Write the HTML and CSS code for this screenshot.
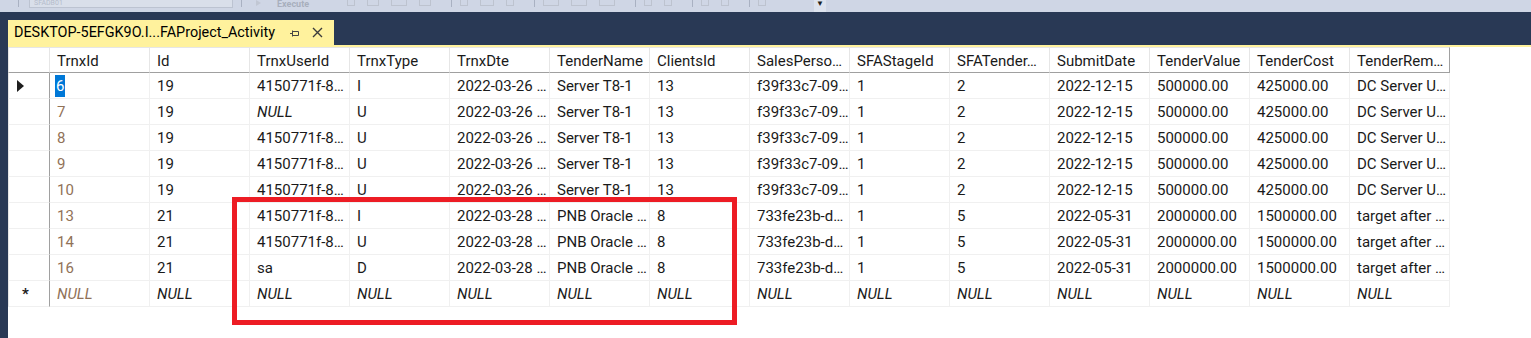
FILE: index.html
```html
<!DOCTYPE html>
<html lang="en">
<head>
    <meta charset="UTF-8">
    <title>DESKTOP-5EFGK9O - SFAProject_Activity</title>
    <link rel="stylesheet" href="styles.css">
</head>
<body>
    <!-- верхняя панель инструментов, почти вся обрезана -->
    <div class="toolbar">
        <span class="sep first"></span>
        <span class="dbbox"><span class="dbname">SFADB01</span></span>
        <span class="sep"></span>
        <span class="tb-play"></span>
        <span class="tb-text">Execute</span>
        <span class="tb-ico w10"></span>
        <span class="tb-ico w14"></span>
        <span class="tb-ico w18"></span>
        <span class="tb-ico w14"></span>
        <span class="sep"></span>
        <span class="tb-ico w10"></span>
        <span class="tb-ico w16"></span>
        <span class="tb-ico w10"></span>
        <span class="sep"></span>
        <span class="tb-ico w18"></span>
        <span class="tb-ico w18"></span>
        <span class="tb-ico w18"></span>
        <span class="sep"></span>
        <span class="tb-ico w10"></span>
        <span class="tb-ico w10"></span>
        <span class="sep"></span>
        <span class="tb-ico w10"></span>
        <span class="tb-ico w10"></span>
        <span class="sep"></span>
        <span class="tb-ico w10"></span>
        <span class="overflow">&#9660;</span>
    </div>

    <div class="docwell">
        <div class="tab">
            <span class="tab-title">DESKTOP-5EFGK9O.I...FAProject_Activity</span>
            <svg class="pin" width="9" height="7" viewBox="0 0 9 7">
                <path d="M0 3.5H2.5M2.5 0.5V6.5M2.5 1.5H8.5V5.5H2.5" fill="none" stroke="#444" stroke-width="1"/>
            </svg>
            <svg class="close" width="11" height="11" viewBox="0 0 11 11">
                <path d="M1 1L10 10M10 1L1 10" stroke="#3c3c3c" stroke-width="1.4"/>
            </svg>
        </div>
    </div>
    <div class="tabline"></div>

    <div class="gridarea">
        <table class="grid">
            <colgroup>
                <col class="c-rh">
                <col class="c"><col class="c"><col class="c"><col class="c"><col class="c"><col class="c"><col class="c">
                <col class="c"><col class="c"><col class="c"><col class="c"><col class="c"><col class="c"><col class="c">
            </colgroup>
            <thead>
                <tr>
                    <th class="rh"></th>
                    <th>TrnxId</th><th>Id</th><th>TrnxUserId</th><th>TrnxType</th><th>TrnxDte</th><th>TenderName</th><th>ClientsId</th>
                    <th>SalesPerso…</th><th>SFAStageId</th><th>SFATender…</th><th>SubmitDate</th><th>TenderValue</th><th>TenderCost</th><th>TenderRem…</th>
                </tr>
            </thead>
            <tbody>
                <tr>
                    <td class="rh"><svg width="7" height="12" viewBox="0 0 7 12"><polygon points="0,0 7,6 0,12" fill="#1e1e1e"/></svg></td>
                    <td class="key"><span class="selected">6</span></td><td>19</td><td>4150771f-8…</td><td>I</td><td>2022-03-26 …</td><td>Server T8-1</td><td>13</td>
                    <td>f39f33c7-09…</td><td>1</td><td>2</td><td>2022-12-15</td><td>500000.00</td><td>425000.00</td><td>DC Server U…</td>
                </tr>
                <tr>
                    <td class="rh"></td>
                    <td class="key">7</td><td>19</td><td class="null">NULL</td><td>U</td><td>2022-03-26 …</td><td>Server T8-1</td><td>13</td>
                    <td>f39f33c7-09…</td><td>1</td><td>2</td><td>2022-12-15</td><td>500000.00</td><td>425000.00</td><td>DC Server U…</td>
                </tr>
                <tr>
                    <td class="rh"></td>
                    <td class="key">8</td><td>19</td><td>4150771f-8…</td><td>U</td><td>2022-03-26 …</td><td>Server T8-1</td><td>13</td>
                    <td>f39f33c7-09…</td><td>1</td><td>2</td><td>2022-12-15</td><td>500000.00</td><td>425000.00</td><td>DC Server U…</td>
                </tr>
                <tr>
                    <td class="rh"></td>
                    <td class="key">9</td><td>19</td><td>4150771f-8…</td><td>U</td><td>2022-03-26 …</td><td>Server T8-1</td><td>13</td>
                    <td>f39f33c7-09…</td><td>1</td><td>2</td><td>2022-12-15</td><td>500000.00</td><td>425000.00</td><td>DC Server U…</td>
                </tr>
                <tr>
                    <td class="rh"></td>
                    <td class="key">10</td><td>19</td><td>4150771f-8…</td><td>U</td><td>2022-03-26 …</td><td>Server T8-1</td><td>13</td>
                    <td>f39f33c7-09…</td><td>1</td><td>2</td><td>2022-12-15</td><td>500000.00</td><td>425000.00</td><td>DC Server U…</td>
                </tr>
                <tr>
                    <td class="rh"></td>
                    <td class="key">13</td><td>21</td><td>4150771f-8…</td><td>I</td><td>2022-03-28 …</td><td>PNB Oracle …</td><td>8</td>
                    <td>733fe23b-d…</td><td>1</td><td>5</td><td>2022-05-31</td><td>2000000.00</td><td>1500000.00</td><td>target after …</td>
                </tr>
                <tr>
                    <td class="rh"></td>
                    <td class="key">14</td><td>21</td><td>4150771f-8…</td><td>U</td><td>2022-03-28 …</td><td>PNB Oracle …</td><td>8</td>
                    <td>733fe23b-d…</td><td>1</td><td>5</td><td>2022-05-31</td><td>2000000.00</td><td>1500000.00</td><td>target after …</td>
                </tr>
                <tr>
                    <td class="rh"></td>
                    <td class="key">16</td><td>21</td><td>sa</td><td>D</td><td>2022-03-28 …</td><td>PNB Oracle …</td><td>8</td>
                    <td>733fe23b-d…</td><td>1</td><td>5</td><td>2022-05-31</td><td>2000000.00</td><td>1500000.00</td><td>target after …</td>
                </tr>
                <tr class="newrow">
                    <td class="rh star">*</td>
                    <td class="key null">NULL</td><td class="null">NULL</td><td class="null">NULL</td><td class="null">NULL</td><td class="null">NULL</td><td class="null">NULL</td><td class="null">NULL</td>
                    <td class="null">NULL</td><td class="null">NULL</td><td class="null">NULL</td><td class="null">NULL</td><td class="null">NULL</td><td class="null">NULL</td><td class="null">NULL</td>
                </tr>
            </tbody>
        </table>

        <!-- красная рамка поверх таблицы -->
        <div class="markup"></div>
    </div>
</body>
</html>
```

FILE: styles.css
```css
html, body {
    margin: 0;
    height: 338px;
    overflow: hidden;
}
body {
    font-family: Roboto, "Noto Sans", sans-serif;
    background-color: #293955;
    display: flex;
    flex-direction: column;
}

/* панель инструментов */
.toolbar {
    height: 12px;
    background-color: #cfd6e5;
    display: flex;
    align-items: flex-start;
    overflow: hidden;
    flex-shrink: 0;
}
.sep {
    width: 1px;
    height: 7px;
    background-color: #a9b1c2;
    margin: 0 8px;
}
.sep.first {
    margin-left: 18px;
    margin-right: 10px;
}
.dbbox {
    width: 198px;
    height: 7px;
    border: 1px solid #bcc3d1;
    border-top: none;
    background-color: #d9dfea;
    display: flex;
    align-items: flex-start;
    padding-left: 4px;
    overflow: hidden;
}
.dbname {
    font-size: 7px;
    line-height: 7px;
    color: #b5bccb;
}
.tb-play {
    width: 0;
    height: 0;
    border-left: 5px solid #c1c7d3;
    border-top: 3px solid transparent;
    border-bottom: 3px solid transparent;
    margin: 0 16px 0 6px;
}
.tb-text {
    font-size: 9px;
    line-height: 9px;
    color: #a8afbd;
    font-weight: bold;
    margin-right: 38px;
}
.tb-ico {
    height: 5px;
    border: 1px solid #bdc3cf;
    border-top: none;
    margin-right: 12px;
}
.w10 { width: 6px; }
.w14 { width: 10px; }
.w16 { width: 12px; }
.w18 { width: 14px; }
.overflow {
    margin-left: 36px;
    width: 12px;
    height: 12px;
    background-color: #dde3ee;
    font-size: 8px;
    line-height: 8px;
    text-align: center;
    color: #1e1e1e;
}

/* вкладка документа */
.docwell {
    padding: 8px 0 0 8px;
    display: flex;
    flex-shrink: 0;
}
.tab {
    height: 25px;
    width: 326px;
    background-color: #fff29d;
    display: flex;
    align-items: center;
    padding-left: 6px;
    box-sizing: border-box;
    font-size: 14.4px;
    color: #000;
}
.tab-title {
    white-space: nowrap;
}
.pin {
    margin-left: 15px;
    margin-top: 1px;
    flex-shrink: 0;
}
.close {
    margin-left: 13px;
    flex-shrink: 0;
}
.tabline {
    height: 2px;
    margin-left: 8px;
    background-color: #fff29d;
    flex-shrink: 0;
}

/* сетка результатов */
.gridarea {
    flex: 1;
    background-color: #fff;
    margin-left: 8px;
    position: relative;
}
.grid {
    table-layout: fixed;
    border-collapse: separate;
    border-spacing: 0;
    width: 1442px;
    font-size: 15px;
    color: #1a1a1a;
}
.c-rh { width: 42px; }
.c { width: 100px; }
.grid th, .grid td {
    box-sizing: border-box;
    padding: 0 0 0 7px;
    text-align: left;
    font-weight: normal;
    white-space: nowrap;
    overflow: hidden;
    border-right: 1px solid #f0f0f0;
    border-bottom: 1px solid #f0f0f0;
}
.grid th {
    height: 26px;
    border-top: 1px solid #e6e6e6;
    border-right-color: #e6e6e6;
    border-bottom-color: #a0a0a0;
    padding-top: 1px;
}
.grid th:last-child {
    border-right-color: #a0a0a0;
}
.grid td {
    height: 26px;
}
.grid .rh {
    border-right: 1px solid #a0a0a0;
    padding: 0 0 0 8px;
    border-left: 1px solid #e6e6e6;
}
.grid th.rh {
    border-right-color: #e6e6e6;
}
.grid td.rh svg {
    display: block;
    margin-top: 1px;
}
.grid .star {
    font-size: 15px;
    font-weight: bold;
    padding-left: 13px;
}
.key {
    color: #917258;
}
.null {
    font-style: italic;
}
.key.null {
    color: #917258;
}
.selected {
    background-color: #0078d7;
    color: #fff;
    padding: 2px 1px;
    margin-left: -2px;
}

/* выделение */
.markup {
    position: absolute;
    left: 224px;
    top: 150px;
    width: 505px;
    height: 128px;
    box-sizing: border-box;
    border: 5px solid #ed1c24;
}
```
